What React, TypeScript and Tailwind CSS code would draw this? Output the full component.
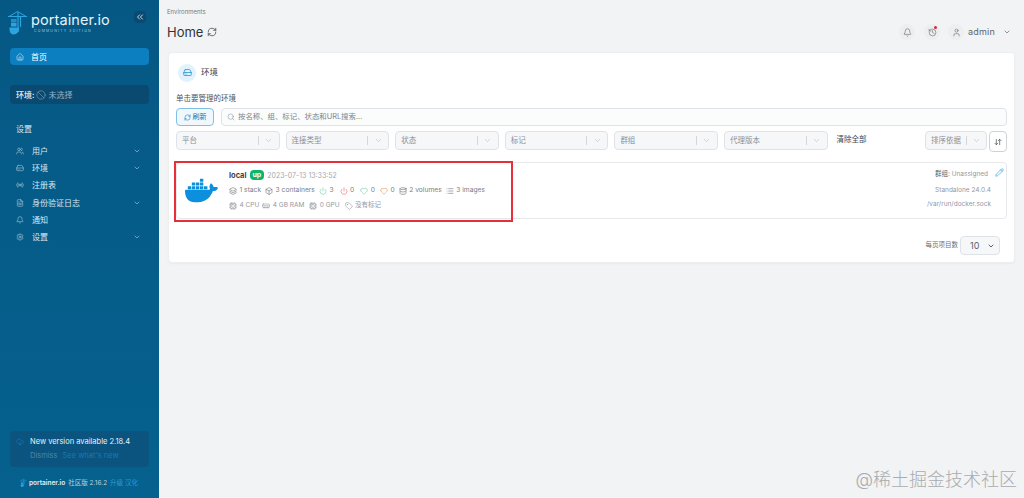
import React from "react";
import {
  Ban,
  Bell,
  ChevronDown,
  ChevronsLeft,
  CloudDownload,
  Cpu,
  Database,
  FileText,
  Heart,
  History,
  Home,
  Layers,
  List,
  ArrowDownUp,
  MemoryStick,
  Pencil,
  Power,
  Radio,
  RefreshCw,
  Search,
  Settings,
  Tag,
  Box,
  HardDrive,
  User,
  Users,
} from "lucide-react";
import { SiDocker } from "react-icons/si";

const fontStack = "font-['Inter','Noto_Sans_CJK_SC',sans-serif]";

const navItems = [
  { label: "用户", icon: Users, chevron: true },
  { label: "环境", icon: HardDrive, chevron: true },
  { label: "注册表", icon: Radio, chevron: false },
  { label: "身份验证日志", icon: FileText, chevron: true },
  { label: "通知", icon: Bell, chevron: false },
  { label: "设置", icon: Settings, chevron: true },
];

const filters = ["平台", "连接类型", "状态", "标记", "群组", "代理版本"];

const PortainerLogo = ({ className }: { className: string }) => (
  <svg viewBox="0 0 20 24" className={className} fill="none">
    <path d="M0 5.500h19M9.500 0.500L1 5.500M9.500 0.500L18 5.500" stroke="#2aa5e0" strokeWidth="1" />
    <path d="M10 1v20M12.500 5v11" stroke="#2aa5e0" strokeWidth="1.200" />
    <rect x="3" y="8" width="5.500" height="3.500" fill="#1f8fcb" />
    <rect x="3" y="12" width="5.500" height="3.500" fill="#2aa5e0" />
    <path d="M1.500 16.500h9.500c.5 4-2 7-5.500 7-3 0-4.300-3-4-7z" fill="#2aa5e0" />
  </svg>
);

const FilterSelect = ({ label }: { label: string }) => (
  <div className="flex h-[19px] w-[103.600px] items-center rounded border border-[#dfe3e8] bg-[#f6f7f8] pl-[5px] text-[7.500px] text-[#8a9098]">
    <span className="flex-1">{label}</span>
    <span className="h-[9px] w-px bg-[#d3d6da]" />
    <span className="flex w-[20px] justify-center">
      <ChevronDown className="h-[9px] w-[9px] text-[#b5b9be]" strokeWidth={1.5} />
    </span>
  </div>
);

const Stat = ({
  icon: Icon,
  text,
  color = "text-[#5c6168]",
  className = "",
}: {
  icon: React.ElementType;
  text: string;
  color?: string;
  className?: string;
}) => (
  <span className={`flex items-center gap-[2.500px] ${className}`}>
    <Icon className={`h-[8px] w-[8px] ${color}`} strokeWidth={1.6} />
    <span>{text}</span>
  </span>
);

export default function App() {
  return (
    <div className={`flex h-[498px] w-[1024px] overflow-hidden bg-[#f2f3f4] ${fontStack}`}>
      <aside className="flex w-[159px] shrink-0 flex-col bg-gradient-to-b from-[#065884] to-[#05618f] text-[#dbe8f0]">
        <div className="flex h-[48px] items-start pl-[8px] pt-[11px]">
          <PortainerLogo className="h-[24px] w-[20px]" />
          <div className="ml-[3px] flex flex-col">
            <span className="text-[14.500px] leading-[18px] tracking-[0.1px] text-[#e4f3fb]">portainer.io</span>
            <span className="pl-[3px] text-[3.500px] leading-[5px] tracking-[1.2px] text-[#9cc3da]">
              COMMUNITY EDITION
            </span>
          </div>
          <span className="ml-auto mr-[13px] flex h-[12px] w-[12px] items-center justify-center rounded-sm bg-[#0b4a70]">
            <ChevronsLeft className="h-[10px] w-[10px] text-[#e4f3fb]" strokeWidth={2} />
          </span>
        </div>

        <div className="mx-[10px] flex h-[17px] items-center rounded bg-[#0b7fc0] pl-[6px] text-[8px] text-white">
          <Home className="h-[8px] w-[8px]" strokeWidth={1.5} />
          <span className="ml-[7px]">首页</span>
        </div>

        <div className="mx-[10px] mt-[20px] flex h-[19px] items-center rounded-sm bg-[#0b4a70] pl-[6px] text-[8px]">
          <span className="font-medium text-[#e4eef4]">环境:</span>
          <Ban className="ml-[2px] h-[10px] w-[10px] text-[#8fb4cb]" strokeWidth={1.2} />
          <span className="ml-[2px] text-[#8fb4cb]">未选择</span>
        </div>

        <div className="ml-[16px] mt-[20px] text-[8px] leading-[10px]">设置</div>

        <nav className="mt-[8.500px] flex flex-col">
          {navItems.map((item) => (
            <div key={item.label} className="flex h-[17.200px] items-center pl-[16px] pr-[18px] text-[8px]">
              <item.icon className="h-[8px] w-[8px] text-[#c2d8e5]" strokeWidth={1.5} />
              <span className="ml-[8px] flex-1">{item.label}</span>
              {item.chevron && <ChevronDown className="h-[8px] w-[8px] text-[#9fc2d6]" strokeWidth={2} />}
            </div>
          ))}
        </nav>

        <div className="mx-[10px] mt-auto h-[36px] rounded-sm bg-[#0b5480] pl-[6px] pt-[5px]">
          <div className="flex items-center text-[7.500px] leading-[11px] text-[#e8f1f6]">
            <CloudDownload className="h-[8px] w-[8px] text-[#1a86c0]" strokeWidth={1.5} />
            <span className="ml-[6px]">New version available 2.18.4</span>
          </div>
          <div className="mt-[3px] pl-[14px] text-[7.500px] leading-[11px]">
            <span className="text-[#4f85a5]">Dismiss</span>
            <span className="ml-[5px] text-[#1a79b0]">See what's new</span>
          </div>
        </div>

        <div className="mb-[9px] mt-[10px] flex items-center pl-[20px] text-[6.500px] leading-[12px]">
          <PortainerLogo className="h-[12px] w-[7px]" />
          <span className="ml-[2px] font-semibold text-[#e4eef4]">portainer.io</span>
          <span className="ml-[3px] text-[#b9d2e0]">社区版 2.16.2</span>
          <span className="ml-[3px] text-[#2b9ad6]">升级 汉化</span>
        </div>
      </aside>

      <main className="relative flex min-w-0 flex-1 flex-col">
        <header className="flex h-[52px] shrink-0 flex-col pl-[8px] pr-[8px] pt-[8px]">
          <div className="text-[6px] leading-[8px] text-[#767b82]">Environments</div>
          <div className="mt-[7px] flex h-[18px] items-center">
            <span className="text-[13px] leading-[18px] text-[#30343a]">Home</span>
            <RefreshCw className="ml-[4px] h-[10px] w-[10px] text-[#3e4248]" strokeWidth={1.8} />
            <div className="ml-auto flex items-center text-[#5c6168]">
              <span className="flex h-[16px] w-[16px] items-center justify-center rounded-full bg-[#eceef0]">
                <Bell className="h-[9px] w-[9px]" strokeWidth={1.5} />
              </span>
              <span className="relative ml-[9px] flex h-[16px] w-[16px] items-center justify-center rounded-full bg-[#eceef0]">
                <History className="h-[9px] w-[9px]" strokeWidth={1.5} />
                <span className="absolute right-[3px] top-[2px] h-[3px] w-[3px] rounded-full bg-[#e5222a]" />
              </span>
              <span className="ml-[8px] flex h-[16px] w-[16px] items-center justify-center rounded-full bg-[#eceef0]">
                <User className="h-[9px] w-[9px]" strokeWidth={1.5} />
              </span>
              <span className="ml-[4px] text-[9px] tracking-[0.2px] text-[#60656c]">admin</span>
              <ChevronDown className="ml-[8px] mr-[5px] h-[8px] w-[8px]" strokeWidth={2} />
            </div>
          </div>
        </header>

        <section className="ml-[9px] mr-[9px] h-[211px] rounded border border-[#eceef0] bg-white pl-[7px] pr-[7px] shadow-[0_1px_2px_rgba(0,0,0,0.04)]">
          <div className="flex h-[39px] items-center">
            <span className="ml-[2px] flex h-[18px] w-[18px] items-center justify-center rounded-full bg-[#e0f2fe]">
              <HardDrive className="h-[9px] w-[9px] text-[#0b84c6]" strokeWidth={1.8} />
            </span>
            <span className="ml-[5px] text-[8.500px] text-[#3d4249]">环境</span>
          </div>
          <div className="mt-[1px] h-[14px] text-[7.500px] leading-[12px] text-[#4c5158]">单击要管理的环境</div>
          <div className="mt-[1px] flex h-[18px] gap-[7px]">
            <button className="flex w-[38px] items-center justify-center gap-[2px] rounded border border-[#7fc0e6] bg-[#f0f8fd] text-[7px] text-[#0b78b5]">
              <RefreshCw className="h-[7px] w-[7px]" strokeWidth={1.8} />
              刷新
            </button>
            <div className="flex flex-1 items-center rounded border border-[#dfe3e8] bg-[#fbfcfc] pl-[5px] text-[7.400px] text-[#80868d]">
              <Search className="h-[8px] w-[8px]" strokeWidth={1.5} />
              <span className="ml-[3px]">按名称、组、标记、状态和URL搜索...</span>
            </div>
          </div>
          <div className="mt-[5px] flex h-[21px] items-start">
            <div className="flex gap-[6px]">
              {filters.map((f) => (
                <FilterSelect key={f} label={f} />
              ))}
            </div>
            <span className="ml-[9px] mt-[3px] text-[7.500px] leading-[12px] text-[#3d4249]">清除全部</span>
            <div className="ml-auto flex h-[19px] w-[62px] items-center rounded border border-[#dfe3e8] bg-[#f6f7f8] pl-[5px] text-[7.500px] text-[#8a9098]">
              <span className="flex-1">排序依据</span>
              <span className="h-[9px] w-px bg-[#d3d6da]" />
              <span className="flex w-[19px] justify-center">
                <ChevronDown className="h-[9px] w-[9px] text-[#b5b9be]" strokeWidth={1.5} />
              </span>
            </div>
            <button className="ml-[2px] flex h-[21px] w-[18px] items-center justify-center rounded border border-[#cfd3d8] bg-white">
              <ArrowDownUp className="h-[8px] w-[8px] text-[#3d4249]" strokeWidth={2} />
            </button>
          </div>

          <div className="relative mt-[10px] flex h-[57px] rounded border border-[#e6e8eb] bg-white">
            <div className="flex w-[52px] shrink-0 items-center justify-center pr-[3px]">
              <SiDocker className="h-[33px] w-[33px] text-[#0c8fdc]" />
            </div>
            <div className="flex flex-col pt-[6px] text-[7px] leading-[11px] text-[#7b8086]">
              <div className="flex h-[12px] items-center">
                <span className="text-[7.500px] font-bold text-[#3d4249]">local</span>
                <span className="ml-[3px] rounded-sm bg-[#0fb36b] px-[3px] text-[7px] font-bold leading-[10px] text-white">
                  up
                </span>
                <span className="ml-[3px] text-[#a3a7ac]">2023-07-13 13:33:52</span>
              </div>
              <div className="mt-[4px] flex h-[11px] items-center gap-[4px] text-[6.700px]">
                <Stat icon={Layers} text="1 stack" />
                <Stat icon={Box} text="3 containers" />
                <Stat icon={Power} text="3" color="text-[#5fc9a0]" />
                <Stat icon={Power} text="0" color="text-[#e0566a]" className="ml-[2px]" />
                <Stat icon={Heart} text="0" color="text-[#5fc9a0]" className="ml-[2px]" />
                <Stat icon={Heart} text="0" color="text-[#e08a3c]" className="ml-[1px]" />
                <Stat icon={Database} text="2 volumes" />
                <Stat icon={List} text="3 images" />
              </div>
              <div className="mt-[4px] flex h-[11px] items-center gap-[3px] text-[6.500px] text-[#94989e]">
                <Stat icon={Cpu} text="4 CPU" color="text-[#8a8f95]" />
                <Stat icon={MemoryStick} text="4 GB RAM" color="text-[#8a8f95]" />
                <Stat icon={Cpu} text="0 GPU" color="text-[#8a8f95]" className="ml-[2px]" />
                <Stat icon={Tag} text="没有标记" color="text-[#8a8f95]" className="ml-[2px]" />
              </div>
            </div>
            <div className="ml-auto flex flex-col items-end pr-[15px] pt-[6px] text-[6.500px] leading-[11px] text-[#94989e]">
              <span className="mr-[3px]">
                <span className="text-[#5c6168]">群组:</span> Unassigned
              </span>
              <span className="mt-[5px]">Standalone 24.0.4</span>
              <span className="mt-[3px]">/var/run/docker.sock</span>
            </div>
            <Pencil className="absolute right-[2px] top-[5px] h-[9px] w-[9px] text-[#1f93d8]" strokeWidth={1.6} />
            <div className="pointer-events-none absolute -left-[3px] -top-[2px] h-[61px] w-[339px] border-2 border-[#e5303a]" />
          </div>

          <div className="mr-[7px] mt-[17px] flex h-[19px] items-center justify-end">
            <span className="text-[6.500px] text-[#6b7078]">每页项目数</span>
            <div className="ml-[2px] flex h-[19px] w-[40px] items-center rounded border border-[#dfe3e8] bg-[#f6f7f8] pl-[9px] pr-[4px] text-[9px] text-[#5c6168]">
              <span className="flex-1">10</span>
              <ChevronDown className="h-[8px] w-[8px] text-[#3d4249]" strokeWidth={2.5} />
            </div>
          </div>
        </section>

        <div className="absolute bottom-[6px] right-[7px] text-[18px] font-light leading-[24px] text-[#a9abae]">
          @稀土掘金技术社区
        </div>
      </main>
    </div>
  );
}
